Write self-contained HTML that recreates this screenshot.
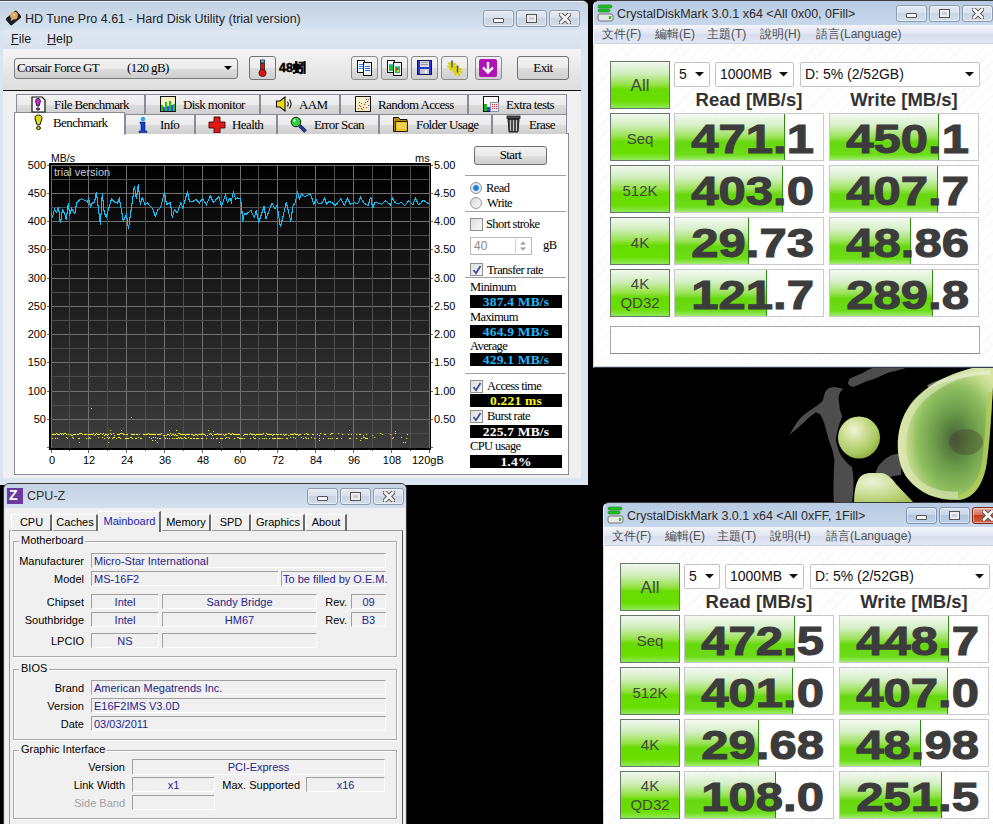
<!DOCTYPE html>
<html><head><meta charset="utf-8">
<style>
*{margin:0;padding:0;box-sizing:border-box}
html,body{width:993px;height:824px;overflow:hidden;background:#000}
body{position:relative;font-family:"Liberation Sans",sans-serif;font-size:12px;color:#000}
.a{position:absolute}
.ser{font-family:"Liberation Serif",serif;letter-spacing:-0.6px}
.frame{background:#dbe6f4}
.cap{position:absolute;height:17px;width:31px;border:1px solid #8a9bb4;border-radius:3px;background:linear-gradient(#e9eef5,#d3dce8 50%,#c8d3e1 51%,#d8e1ec)}
.tt{position:absolute;font-size:12px;white-space:nowrap;color:#1a1a1a}
.btn{position:absolute;border:1px solid #707070;border-radius:3px;background:linear-gradient(#f2f2f2,#ebebeb 50%,#dddddd 51%,#cfcfcf)}
.tab{position:absolute;border:1px solid #898c95;border-bottom:none;background:linear-gradient(#f2f2f2,#ebebeb 50%,#dddddd 51%,#cfcfcf);font-size:13px;white-space:nowrap}
.lbl{position:absolute;white-space:nowrap}
</style></head><body>
<div class="a" style="left:0;top:0;width:588px;height:485px;background:#dbe5f2;border-top:1px solid #4a4a4a;border-radius:0 6px 0 0;overflow:hidden"><div class="a" style="left:0;top:0;width:588px;height:30px;background:linear-gradient(#c2d1e2,#d7e3f0);border-top:1px solid #e6eef6"></div></div><svg class="a" style="left:5px;top:10px" width="16" height="16"><rect x="1.5" y="3.5" width="14" height="9" rx="1.5" transform="rotate(-40 8.5 8)" fill="#1c1c1c"/><circle cx="9" cy="5.6" r="3.9" fill="#eaa848"/><circle cx="9" cy="5" r="1.3" fill="#cfcfcf"/><path d="M9 5.5L6.3 10.5" stroke="#b0b0b0" stroke-width="1.6"/></svg><div class="tt" style="left:25px;top:11px;font-size:12.5px;line-height:16px;color:#222">HD Tune Pro 4.61 - Hard Disk Utility (trial version)</div><div class="a" style="left:483px;top:10px;width:31px;height:17px;border:1px solid #8d9ab0;border-radius:3px;background:linear-gradient(#e4eaf2,#d8e1ec 45%,#c9d5e4 50%,#d4deea 100%);box-shadow:inset 0 0 0 1px rgba(255,255,255,0.45)"></div><div class="a" style="left:516px;top:10px;width:31px;height:17px;border:1px solid #8d9ab0;border-radius:3px;background:linear-gradient(#e4eaf2,#d8e1ec 45%,#c9d5e4 50%,#d4deea 100%);box-shadow:inset 0 0 0 1px rgba(255,255,255,0.45)"></div><div class="a" style="left:549px;top:10px;width:31px;height:17px;border:1px solid #8d9ab0;border-radius:3px;background:linear-gradient(#e4eaf2,#d8e1ec 45%,#c9d5e4 50%,#d4deea 100%);box-shadow:inset 0 0 0 1px rgba(255,255,255,0.45)"></div><div class="a" style="left:493px;top:18px;width:11px;height:5px;border:1px solid #555;border-radius:1px;background:#f4f4f4"></div><div class="a" style="left:527px;top:15px;width:9px;height:7px;border:2px solid #eee;outline:1px solid #555;background:#c8d0dc"></div><svg class="a" style="left:559px;top:13px" width="12" height="11"><path d="M2 1.5L10 9.5M10 1.5L2 9.5" stroke="#555" stroke-width="4.6" stroke-linecap="round"/><path d="M2 1.5L10 9.5M10 1.5L2 9.5" stroke="#f4f4f4" stroke-width="2.8" stroke-linecap="round"/></svg><div class="a" style="left:3px;top:30px;width:578px;height:19px;background:linear-gradient(#dfe7f2,#d8e2ee)"></div><div class="tt" style="left:11px;top:31px;font-size:12.5px;line-height:16px"><u>F</u>ile</div><div class="tt" style="left:47px;top:31px;font-size:12.5px;line-height:16px"><u>H</u>elp</div><div class="a" style="left:3px;top:49px;width:578px;height:42px;background:linear-gradient(#f4f4f4,#e6e6e6 60%,#dedede);border-bottom:1px solid #111"></div><div class="a" style="left:3px;top:91px;width:578px;height:387px;background:#f0f0f0"></div><div class="a" style="left:14px;top:133px;width:555px;height:342px;background:#fff;border:1px solid #898c95"></div><div class="btn" style="left:14px;top:58px;width:224px;height:21px;border-color:#7a7a7a"></div><div class="lbl ser" style="left:17px;top:60px;font-size:13px;line-height:16px">Corsair Force GT</div><div class="lbl ser" style="left:127px;top:60px;font-size:13px;line-height:16px">(120 gB)</div><svg class="a" style="left:224px;top:66px" width="8" height="5"><path d="M0 0H8L4 4Z" fill="#000"/></svg><div class="btn" style="left:249px;top:56px;width:27px;height:24px"></div><svg class="a" style="left:257px;top:59px" width="12" height="18"><rect x="3.5" y="1" width="4" height="3" fill="#4cd0e8" stroke="#222" stroke-width="0.8"/><rect x="3.5" y="4" width="4" height="9" fill="#e01010" stroke="#222" stroke-width="0.8"/><circle cx="5.5" cy="14" r="3.6" fill="#e01010" stroke="#222" stroke-width="0.8"/></svg><div class="lbl" style="left:279px;top:60px;font-size:12.5px;font-weight:bold;line-height:15px;-webkit-text-stroke:0.5px #000">48<span style="font-size:13px;display:inline-block;width:13px;text-align:center">蚓</span></div><div class="btn" style="left:351px;top:56px;width:27px;height:24px;border-color:#8a8a8a"></div><div class="btn" style="left:381px;top:56px;width:27px;height:24px;border-color:#8a8a8a"></div><div class="btn" style="left:411px;top:56px;width:27px;height:24px;border-color:#8a8a8a"></div><div class="btn" style="left:441px;top:56px;width:27px;height:24px;border-color:#8a8a8a"></div><div class="btn" style="left:475px;top:56px;width:27px;height:24px;border-color:#8a8a8a"></div><svg class="a" style="left:356px;top:59px" width="18" height="18" shape-rendering="crispEdges"><rect x="1.5" y="1.5" width="7" height="12" fill="#fff" stroke="#111"/><rect x="7.5" y="3.5" width="8" height="13" fill="#f2f2f2" stroke="#111"/><path d="M3 5.5h4M3 7.5h4M3 9.5h4" stroke="#1a8cff"/><path d="M9 7.5h5M9 9.5h5M9 11.5h5" stroke="#1a6cff"/></svg><svg class="a" style="left:386px;top:59px" width="18" height="18" shape-rendering="crispEdges"><rect x="1.5" y="1.5" width="7" height="12" fill="#fff" stroke="#111"/><rect x="3" y="5" width="5" height="7" fill="#20c040"/><rect x="3" y="5" width="5" height="1" fill="#40c8f0"/><rect x="7.5" y="3.5" width="8" height="13" fill="#f2f2f2" stroke="#111"/><rect x="9" y="7" width="5" height="7" fill="#20c040"/><rect x="9" y="7" width="5" height="1" fill="#40c8f0"/><rect x="10" y="9" width="2" height="2" fill="#e02020"/><rect x="11" y="11" width="2" height="2" fill="#e0d020"/></svg><svg class="a" style="left:416px;top:59px" width="17" height="17" shape-rendering="crispEdges"><rect x="1.5" y="1.5" width="14" height="14" fill="#2838d8" stroke="#101060"/><rect x="4" y="2" width="9" height="6" fill="#d8d8d8"/><path d="M5 3.5h7M5 5.5h7" stroke="#999"/><rect x="4" y="10" width="9" height="5" fill="#c8c8c8"/><rect x="9" y="11" width="2" height="3" fill="#fff"/></svg><svg class="a" style="left:445px;top:59px" width="20" height="18"><circle cx="7" cy="7" r="3.6" fill="#e8e010" stroke="#d8d000" stroke-width="2.6" stroke-dasharray="1.8 1.4"/><circle cx="12.5" cy="12" r="3.6" fill="#e8e010" stroke="#d8d000" stroke-width="2.6" stroke-dasharray="1.8 1.4"/><path d="M7 1.5v7M12.5 6.5v7" stroke="#888" stroke-width="2"/><path d="M7 1.5v7M12.5 6.5v7" stroke="#333" stroke-width="0.6"/></svg><svg class="a" style="left:478px;top:58px" width="21" height="20"><rect x="1" y="1" width="18" height="18" rx="2" fill="#b012b8"/><path d="M10 4v10M5 9.5l5 5 5-5" stroke="#fff" stroke-width="2.4" fill="none"/></svg><div class="btn" style="left:517px;top:56px;width:52px;height:24px"></div><div class="lbl ser" style="left:517px;width:52px;text-align:center;top:60px;font-size:13px;line-height:16px">Exit</div><div class="tab" style="left:16px;top:94px;width:129px;height:20px"></div><div class="lbl ser" style="left:54px;top:98px;font-size:13px;line-height:14px">File Benchmark</div><div class="tab" style="left:145px;top:94px;width:115px;height:20px"></div><div class="lbl ser" style="left:183px;top:98px;font-size:13px;line-height:14px">Disk monitor</div><div class="tab" style="left:260px;top:94px;width:80px;height:20px"></div><div class="lbl ser" style="left:299px;top:98px;font-size:13px;line-height:14px">AAM</div><div class="tab" style="left:340px;top:94px;width:128px;height:20px"></div><div class="lbl ser" style="left:378px;top:98px;font-size:13px;line-height:14px">Random Access</div><div class="tab" style="left:468px;top:94px;width:99px;height:20px"></div><div class="lbl ser" style="left:506px;top:98px;font-size:13px;line-height:14px">Extra tests</div><div class="tab" style="left:125px;top:114px;width:70px;height:20px"></div><div class="lbl ser" style="left:160px;top:118px;font-size:13px;line-height:14px">Info</div><div class="tab" style="left:195px;top:114px;width:82px;height:20px"></div><div class="lbl ser" style="left:232px;top:118px;font-size:13px;line-height:14px">Health</div><div class="tab" style="left:277px;top:114px;width:102px;height:20px"></div><div class="lbl ser" style="left:314px;top:118px;font-size:13px;line-height:14px">Error Scan</div><div class="tab" style="left:379px;top:114px;width:113px;height:20px"></div><div class="lbl ser" style="left:416px;top:118px;font-size:13px;line-height:14px">Folder Usage</div><div class="tab" style="left:492px;top:114px;width:75px;height:20px"></div><div class="lbl ser" style="left:529px;top:118px;font-size:13px;line-height:14px">Erase</div><div class="a" style="left:14px;top:112px;width:111px;height:23px;background:#fff;border:1px solid #898c95;border-bottom:none"></div><div class="lbl ser" style="left:53px;top:116px;font-size:13px;line-height:14px">Benchmark</div><svg class="a" style="left:31px;top:96px" width="15" height="17"><path d="M1 1h10l3 3v12H1Z" fill="#f4f4f4" stroke="#111" stroke-width="1.2"/><path d="M7 2.5C9 2.5 9.6 4 9.2 6L8 10H6L4.8 6C4.4 4 5 2.5 7 2.5Z" fill="#e020e0" stroke="#111" stroke-width="0.9"/><ellipse cx="7" cy="13" rx="1.6" ry="1.1" fill="#e020e0" stroke="#111" stroke-width="0.9"/></svg><svg class="a" style="left:160px;top:96px" width="17" height="17" shape-rendering="crispEdges"><rect x="0.5" y="0.5" width="15" height="15" fill="#f6f2c0" stroke="#111"/><rect x="1" y="9" width="2" height="6" fill="#20c020"/><rect x="3" y="11" width="2" height="4" fill="#3050f0"/><rect x="5" y="6" width="2" height="9" fill="#20c020"/><rect x="7" y="10" width="2" height="5" fill="#3050f0"/><rect x="9" y="5" width="2" height="10" fill="#20c020"/><rect x="11" y="9" width="2" height="6" fill="#3050f0"/><rect x="13" y="8" width="2" height="7" fill="#20c020"/></svg><svg class="a" style="left:275px;top:96px" width="18" height="16"><path d="M1.5 5h3.5l5-4v14l-5-4H1.5Z" fill="#f0d818" stroke="#111" stroke-width="1.1"/><path d="M12.5 5.5q1.5 2.5 0 5M14.5 3.5q3 4.5 0 9" stroke="#111" stroke-width="1.1" fill="none"/></svg><svg class="a" style="left:355px;top:96px" width="17" height="17" shape-rendering="crispEdges"><rect x="0.5" y="0.5" width="15" height="15" fill="#f8f0c8" stroke="#111"/><path d="M3 12h1M5 10h1M7 13h1M9 8h1M11 11h1M12 5h1M6 7h1M13 3h1M4 6h1" stroke="#e02020"/><path d="M4 9h1M8 11h1M10 6h1M13 9h1M6 12h1M11 3h1" stroke="#2040e0"/></svg><svg class="a" style="left:483px;top:96px" width="17" height="17" shape-rendering="crispEdges"><rect x="0.5" y="0.5" width="15" height="15" fill="#fff" stroke="#111"/><rect x="1" y="8" width="3" height="7" fill="#20b020"/><rect x="4" y="11" width="3" height="4" fill="#2050e0"/><rect x="7.5" y="6.5" width="8" height="9" fill="#e8ecf8" stroke="#8890b0"/><path d="M9 8.5h1M11 8.5h1M13 8.5h1M9 10.5h1M11 10.5h1M13 10.5h1M9 12.5h1M11 12.5h1M13 12.5h1" stroke="#e02020"/></svg><svg class="a" style="left:33px;top:114px" width="11" height="17"><path d="M5.5 1C8.3 1 9.2 2.8 8.8 5L7 10.8H4L2.2 5C1.8 2.8 2.7 1 5.5 1Z" fill="#e0e010" stroke="#111" stroke-width="1"/><ellipse cx="5.5" cy="14" rx="2" ry="1.5" fill="#e0e010" stroke="#111" stroke-width="1"/></svg><svg class="a" style="left:138px;top:116px" width="10" height="17"><circle cx="5" cy="3" r="2.2" fill="#20a8f0"/><path d="M2 6h5v9h2v1.5H1V15h2V7.5H2z" fill="#1040d0" stroke="#102060" stroke-width="0.6"/></svg><svg class="a" style="left:208px;top:116px" width="18" height="17"><path d="M6 1h6v5h5v6h-5v5H6v-5H1V6h5z" fill="#e01818" stroke="#400808" stroke-width="0.9"/></svg><svg class="a" style="left:290px;top:116px" width="18" height="17"><path d="M9.5 9.5l6 6" stroke="#111" stroke-width="3.6"/><path d="M9.5 9.5l6 6" stroke="#2040c0" stroke-width="2"/><circle cx="6" cy="6" r="4.8" fill="#30d040" stroke="#111" stroke-width="0.9"/><circle cx="4.5" cy="4.5" r="1.3" fill="#c8f8c8"/></svg><svg class="a" style="left:392px;top:115px" width="18" height="18"><path d="M1.5 2.5h5l1.5 2h7v12h-13.5z" fill="#b88810" stroke="#111" stroke-width="1"/><path d="M3.5 6.5h12v10h-12z" fill="#e8c030" stroke="#111" stroke-width="0.9"/><path d="M5 8h9v6H5z" fill="#f4d858" opacity="0.7"/></svg><svg class="a" style="left:506px;top:115px" width="15" height="18"><rect x="1" y="1" width="13" height="2.5" fill="#555" stroke="#111" stroke-width="0.8"/><path d="M2 4h11l-1 13H3z" fill="#444" stroke="#111" stroke-width="0.9"/><path d="M4.5 5v11M7.5 5v11M10.5 5v11" stroke="#c8c8c8" stroke-width="1.1"/></svg><div class="btn" style="left:474px;top:146px;width:73px;height:19px"></div><div class="lbl ser" style="left:474px;width:73px;text-align:center;top:148px;font-size:13px;line-height:14px">Start</div><div class="a" style="left:465px;top:175px;width:101px;height:1px;background:#a0a0a0"></div><div class="a" style="left:465px;top:211px;width:101px;height:1px;background:#a0a0a0"></div><div class="a" style="left:465px;top:277px;width:101px;height:1px;background:#a0a0a0"></div><div class="a" style="left:465px;top:373px;width:101px;height:1px;background:#a0a0a0"></div><div class="a" style="left:470px;top:182px;width:12px;height:12px;border-radius:50%;border:1px solid #8a8a8a;background:radial-gradient(circle,#1e6fd0 0,#2a8ae8 2.5px,#dfe8f2 3.5px,#f4f4f4 6px)"></div><div class="a" style="left:470px;top:197px;width:12px;height:12px;border-radius:50%;border:1px solid #9a9a9a;background:linear-gradient(135deg,#d8d8d8,#fafafa)"></div><div class="lbl ser" style="left:486px;top:181px;font-size:12.5px;line-height:14px">Read</div><div class="lbl ser" style="left:487px;top:196px;font-size:12.5px;line-height:14px">Write</div><div class="a" style="left:470px;top:218px;width:13px;height:13px;border:1px solid #8f8f8f;background:linear-gradient(135deg,#dcdcdc,#f8f8f8)"></div><div class="lbl ser" style="left:486px;top:217px;font-size:12.5px;line-height:14px">Short stroke</div><div class="a" style="left:470px;top:237px;width:62px;height:18px;border:1px solid #b8b8b8;background:#fff"></div><div class="lbl" style="left:474px;top:239px;font-size:12px;line-height:14px;color:#8a8a8a">40</div><div class="a" style="left:515px;top:239px;width:15px;height:14px;border-left:1px solid #d0d0d0"></div><svg class="a" style="left:518px;top:240px" width="10" height="12"><path d="M2 4.5L5 1.5L8 4.5Z" fill="#9a9a9a"/><path d="M2 7.5L5 10.5L8 7.5Z" fill="#9a9a9a"/></svg><div class="lbl ser" style="left:543px;top:238px;font-size:12.5px;line-height:14px">gB</div><div class="a" style="left:470px;top:263px;width:13px;height:13px;border:1px solid #8f8f8f;background:linear-gradient(135deg,#dcdcdc,#f8f8f8)"></div><svg class="a" style="left:472px;top:265px" width="10" height="10"><path d="M1.5 5l2.5 3.2L8.5 1" stroke="#3a4fa0" stroke-width="1.8" fill="none"/></svg><div class="lbl ser" style="left:487px;top:263px;font-size:12.5px;line-height:14px">Transfer rate</div><div class="lbl ser" style="left:470px;top:281px;font-size:12.5px;line-height:13px">Minimum</div><div class="a ser" style="left:470px;top:295px;width:92px;height:13px;background:#000;color:#20b8f8;font-weight:bold;font-size:13.5px;line-height:13px;text-align:center;letter-spacing:0.2px">387.4 MB/s</div><div class="lbl ser" style="left:470px;top:311px;font-size:12.5px;line-height:13px">Maximum</div><div class="a ser" style="left:470px;top:325px;width:92px;height:13px;background:#000;color:#20b8f8;font-weight:bold;font-size:13.5px;line-height:13px;text-align:center;letter-spacing:0.2px">464.9 MB/s</div><div class="lbl ser" style="left:470px;top:340px;font-size:12.5px;line-height:13px">Average</div><div class="a ser" style="left:470px;top:353px;width:92px;height:13px;background:#000;color:#20b8f8;font-weight:bold;font-size:13.5px;line-height:13px;text-align:center;letter-spacing:0.2px">429.1 MB/s</div><div class="a" style="left:470px;top:380px;width:13px;height:13px;border:1px solid #8f8f8f;background:linear-gradient(135deg,#dcdcdc,#f8f8f8)"></div><svg class="a" style="left:472px;top:382px" width="10" height="10"><path d="M1.5 5l2.5 3.2L8.5 1" stroke="#3a4fa0" stroke-width="1.8" fill="none"/></svg><div class="lbl ser" style="left:487px;top:379px;font-size:12.5px;line-height:14px">Access time</div><div class="a ser" style="left:470px;top:394px;width:92px;height:13px;background:#000;color:#f8f820;font-weight:bold;font-size:13.5px;line-height:13px;text-align:center;letter-spacing:0.2px">0.221 ms</div><div class="a" style="left:470px;top:410px;width:13px;height:13px;border:1px solid #8f8f8f;background:linear-gradient(135deg,#dcdcdc,#f8f8f8)"></div><svg class="a" style="left:472px;top:412px" width="10" height="10"><path d="M1.5 5l2.5 3.2L8.5 1" stroke="#3a4fa0" stroke-width="1.8" fill="none"/></svg><div class="lbl ser" style="left:487px;top:409px;font-size:12.5px;line-height:14px">Burst rate</div><div class="a ser" style="left:470px;top:425px;width:92px;height:13px;background:#000;color:#fff;font-weight:bold;font-size:13.5px;line-height:13px;text-align:center;letter-spacing:0.2px">225.7 MB/s</div><div class="lbl ser" style="left:470px;top:440px;font-size:12.5px;line-height:13px">CPU usage</div><div class="a ser" style="left:470px;top:455px;width:92px;height:13px;background:#000;color:#fff;font-weight:bold;font-size:13.5px;line-height:13px;text-align:center;letter-spacing:0.2px">1.4%</div><svg class="a" style="left:0;top:0" width="588" height="485"><defs><linearGradient id="cg" x1="0" y1="0" x2="0" y2="1"><stop offset="0" stop-color="#000"/><stop offset="1" stop-color="#3d3d3d"/></linearGradient></defs><rect x="49" y="163" width="382" height="287" fill="#000"/><rect x="51" y="165" width="379" height="283" fill="url(#cg)"/><path d="M51.5 165V448M88.5 165V448M126.5 165V448M164.5 165V448M202.5 165V448M240.5 165V448M277.5 165V448M315.5 165V448M353.5 165V448M391.5 165V448M429.5 165V448M51 165.5H430M51 193.5H430M51 221.5H430M51 249.5H430M51 278.5H430M51 306.5H430M51 334.5H430M51 362.5H430M51 391.5H430M51 419.5H430" stroke="#707070" stroke-width="1" fill="none"/><path d="M69.5 165V448M107.5 165V448M145.5 165V448M183.5 165V448M221.5 165V448M258.5 165V448M296.5 165V448M334.5 165V448M372.5 165V448M410.5 165V448M51 179.5H430M51 207.5H430M51 235.5H430M51 264.5H430M51 292.5H430M51 320.5H430M51 348.5H430M51 376.5H430M51 405.5H430M51 433.5H430" stroke="#4e4e4e" stroke-width="1" fill="none"/><path d="M51.5 450v3M69.5 450v1M88.5 450v3M107.5 450v1M126.5 450v3M145.5 450v1M164.5 450v3M183.5 450v1M202.5 450v3M221.5 450v1M240.5 450v3M258.5 450v1M277.5 450v3M296.5 450v1M315.5 450v3M334.5 450v1M353.5 450v3M372.5 450v1M391.5 450v3M410.5 450v1M429.5 450v3M431 165.5h2M47 165.5h2M431 193.5h2M47 193.5h2M431 221.5h2M47 221.5h2M431 249.5h2M47 249.5h2M431 278.5h2M47 278.5h2M431 306.5h2M47 306.5h2M431 334.5h2M47 334.5h2M431 362.5h2M47 362.5h2M431 391.5h2M47 391.5h2M431 419.5h2M47 419.5h2M431 447.5h2M47 447.5h2" stroke="#6b6b6b" stroke-width="1" fill="none"/><rect x="49" y="448" width="382" height="2" fill="#000"/><text x="54" y="176" font-family="Liberation Sans" font-size="11" fill="#c8c8c8">trial version</text><path d="M51.3 213.0 L52.6 216.9 L54.5 209.0 L56.5 212.3 L58.5 207.1 L60.4 223.4 L62.4 209.7 L64.4 213.0 L66.3 219.5 L68.3 203.1 L69.6 215.6 L71.6 208.4 L74.8 213.6 L76.8 202.5 L81.4 198.6 L87.3 201.8 L88.6 198.6 L90.5 206.4 L92.5 202.5 L94.5 202.5 L96.4 192.0 L98.4 209.0 L100.4 224.7 L102.3 193.3 L104.3 213.0 L106.2 217.5 L111.5 198.6 L114.8 202.5 L117.4 203.1 L119.3 198.6 L123.3 220.8 L126.5 214.3 L128.5 228.7 L131.8 205.1 L134.4 186.1 L136.4 199.2 L138.3 184.2 L140.3 204.5 L142.2 197.3 L144.9 204.5 L147.5 203.1 L152.7 209.0 L155.3 216.2 L157.9 209.7 L160.6 207.7 L164.5 192.0 L166.5 204.5 L170.4 202.5 L172.3 218.2 L174.3 209.7 L177.0 212.3 L177.6 212.3 L178.9 208.4 L180.9 202.5 L182.9 208.4 L187.4 191.4 L189.4 201.2 L193.3 201.2 L195.9 199.2 L199.2 203.1 L202.5 198.6 L206.4 204.5 L210.3 195.9 L213.6 202.5 L218.8 196.6 L221.5 206.4 L225.4 194.6 L227.4 202.5 L230.0 197.9 L231.3 201.8 L233.2 192.0 L235.9 199.2 L237.8 197.9 L240.4 198.6 L241.8 207.1 L242.4 222.1 L244.4 213.6 L246.3 214.3 L250.9 210.3 L254.2 217.5 L256.2 211.0 L258.8 222.1 L264.0 206.4 L266.0 218.8 L271.9 203.1 L275.1 209.0 L277.1 205.1 L280.4 227.4 L286.3 202.5 L290.8 221.5 L292.8 206.4 L295.4 202.5 L297.4 191.4 L299.3 199.2 L301.3 194.0 L304.1 196.1 L305.0 196.6 L309.5 194.0 L311.6 196.8 L313.6 204.2 L316.3 199.5 L318.4 203.5 L321.8 202.9 L324.5 198.1 L326.5 204.2 L329.2 201.5 L332.6 202.9 L335.3 205.6 L340.8 198.8 L344.2 205.6 L347.6 198.1 L350.3 204.2 L354.4 202.9 L357.8 203.5 L360.5 197.4 L363.9 202.9 L368.0 205.6 L370.7 196.8 L372.7 208.3 L374.8 202.2 L377.5 202.9 L381.6 204.2 L385.6 200.8 L390.4 204.9 L392.4 198.1 L395.2 202.9 L399.2 203.5 L401.3 202.2 L404.7 205.6 L408.8 200.8 L412.8 204.9 L415.6 198.1 L418.3 204.9 L421.0 202.9 L423.0 200.1 L429.1 204.2" stroke="#12c2fa" stroke-width="1.1" fill="none" stroke-linejoin="miter" shape-rendering="crispEdges"/><path d="M52 434.5h1M52 438.5h1M53 434.5h1M54 434.5h1M55 434.5h1M55 438.5h1M56 433.5h1M57 434.5h1M57 438.5h1M58 434.5h1M59 434.5h1M60 433.5h1M61 434.5h1M62 433.5h1M63 434.5h1M64 433.5h1M65 433.5h1M66 434.5h1M66 437.5h1M67 438.5h1M68 434.5h1M70 434.5h1M71 435.5h1M72 435.5h1M72 437.5h1M73 434.5h1M73 438.5h1M74 434.5h1M75 434.5h1M77 434.5h1M78 434.5h1M78 438.5h1M79 433.5h1M79 438.5h1M79 442.5h1M80 433.5h1M81 433.5h1M82 434.5h1M84 434.5h1M85 434.5h1M86 434.5h1M86 438.5h1M88 434.5h1M88 438.5h1M89 434.5h1M89 437.5h1M90 434.5h1M90 438.5h1M91 434.5h1M92 434.5h1M93 433.5h1M94 435.5h1M95 434.5h1M96 433.5h1M97 434.5h1M98 434.5h1M98 437.5h1M99 434.5h1M100 433.5h1M102 434.5h1M102 437.5h1M103 433.5h1M104 435.5h1M104 438.5h1M105 434.5h1M106 434.5h1M107 435.5h1M107 437.5h1M108 434.5h1M108 438.5h1M108 442.5h1M109 437.5h1M110 433.5h1M110 430.5h1M111 434.5h1M112 438.5h1M113 433.5h1M113 437.5h1M114 435.5h1M114 437.5h1M116 438.5h1M117 434.5h1M118 434.5h1M118 437.5h1M119 434.5h1M119 437.5h1M120 433.5h1M120 438.5h1M121 433.5h1M121 430.5h1M122 433.5h1M123 434.5h1M124 434.5h1M125 438.5h1M126 434.5h1M126 438.5h1M127 434.5h1M127 438.5h1M128 438.5h1M130 437.5h1M131 434.5h1M131 437.5h1M132 434.5h1M132 438.5h1M133 434.5h1M134 434.5h1M135 438.5h1M136 434.5h1M136 438.5h1M137 434.5h1M138 437.5h1M139 434.5h1M140 438.5h1M141 438.5h1M143 434.5h1M144 434.5h1M145 434.5h1M146 434.5h1M147 434.5h1M148 433.5h1M149 434.5h1M149 437.5h1M150 434.5h1M151 434.5h1M151 438.5h1M152 434.5h1M152 440.5h1M153 434.5h1M153 437.5h1M154 434.5h1M155 434.5h1M155 437.5h1M155 440.5h1M157 434.5h1M157 438.5h1M157 442.5h1M158 434.5h1M159 434.5h1M159 438.5h1M160 434.5h1M160 438.5h1M161 433.5h1M163 435.5h1M164 435.5h1M164 437.5h1M165 438.5h1M166 435.5h1M167 434.5h1M167 438.5h1M168 434.5h1M169 435.5h1M169 438.5h1M169 430.5h1M170 433.5h1M171 435.5h1M172 434.5h1M172 438.5h1M173 434.5h1M174 435.5h1M174 438.5h1M175 434.5h1M176 435.5h1M176 438.5h1M176 430.5h1M177 435.5h1M177 438.5h1M178 433.5h1M178 437.5h1M179 433.5h1M179 438.5h1M180 434.5h1M180 437.5h1M181 434.5h1M181 438.5h1M182 434.5h1M182 438.5h1M183 434.5h1M184 434.5h1M184 437.5h1M185 435.5h1M185 438.5h1M186 434.5h1M186 438.5h1M187 434.5h1M188 434.5h1M188 437.5h1M189 434.5h1M190 438.5h1M191 434.5h1M191 438.5h1M192 434.5h1M193 435.5h1M193 438.5h1M194 435.5h1M194 438.5h1M195 434.5h1M196 434.5h1M196 438.5h1M197 435.5h1M197 438.5h1M198 434.5h1M198 438.5h1M199 434.5h1M200 434.5h1M201 434.5h1M201 438.5h1M202 433.5h1M202 438.5h1M203 434.5h1M204 434.5h1M205 435.5h1M206 438.5h1M207 435.5h1M208 430.5h1M209 434.5h1M210 433.5h1M211 434.5h1M211 438.5h1M212 435.5h1M213 438.5h1M213 431.5h1M214 434.5h1M215 434.5h1M216 434.5h1M216 438.5h1M217 433.5h1M217 438.5h1M218 434.5h1M219 434.5h1M219 442.5h1M220 434.5h1M220 438.5h1M221 434.5h1M221 438.5h1M222 438.5h1M223 434.5h1M224 435.5h1M225 434.5h1M225 438.5h1M226 434.5h1M226 437.5h1M228 433.5h1M228 437.5h1M229 433.5h1M229 438.5h1M230 434.5h1M231 434.5h1M232 433.5h1M233 434.5h1M234 434.5h1M234 438.5h1M235 434.5h1M236 434.5h1M237 434.5h1M237 437.5h1M238 434.5h1M238 437.5h1M239 434.5h1M239 438.5h1M240 438.5h1M241 438.5h1M242 438.5h1M243 435.5h1M244 434.5h1M244 438.5h1M245 434.5h1M246 434.5h1M247 434.5h1M249 434.5h1M250 433.5h1M250 438.5h1M251 434.5h1M252 434.5h1M253 434.5h1M253 437.5h1M254 434.5h1M254 438.5h1M255 435.5h1M255 438.5h1M256 434.5h1M257 434.5h1M258 434.5h1M259 434.5h1M259 438.5h1M260 434.5h1M261 434.5h1M262 434.5h1M262 438.5h1M263 433.5h1M264 438.5h1M265 435.5h1M266 433.5h1M266 438.5h1M267 434.5h1M268 434.5h1M269 434.5h1M269 438.5h1M270 434.5h1M271 434.5h1M272 435.5h1M272 438.5h1M273 434.5h1M273 438.5h1M274 434.5h1M274 438.5h1M275 438.5h1M276 434.5h1M277 434.5h1M277 438.5h1M278 434.5h1M278 438.5h1M279 438.5h1M280 434.5h1M280 438.5h1M281 434.5h1M282 438.5h1M283 434.5h1M284 435.5h1M285 434.5h1M286 434.5h1M286 438.5h1M287 438.5h1M288 435.5h1M290 434.5h1M290 437.5h1M291 434.5h1M292 434.5h1M293 434.5h1M293 437.5h1M294 433.5h1M295 434.5h1M295 438.5h1M296 434.5h1M297 434.5h1M298 435.5h1M299 434.5h1M300 434.5h1M301 437.5h1M303 438.5h1M304 434.5h1M305 437.5h1M306 433.5h1M306 438.5h1M307 434.5h1M308 434.5h1M308 438.5h1M311 437.5h1M312 434.5h1M313 434.5h1M314 438.5h1M317 434.5h1M319 435.5h1M319 438.5h1M319 440.5h1M320 433.5h1M323 438.5h1M324 434.5h1M325 434.5h1M328 438.5h1M330 434.5h1M330 438.5h1M331 433.5h1M332 433.5h1M332 438.5h1M336 438.5h1M337 438.5h1M338 433.5h1M341 438.5h1M342 434.5h1M348 434.5h1M349 438.5h1M349 430.5h1M350 438.5h1M351 434.5h1M356 434.5h1M356 438.5h1M359 434.5h1M360 434.5h1M360 440.5h1M361 438.5h1M363 435.5h1M363 437.5h1M364 437.5h1M365 438.5h1M366 434.5h1M366 438.5h1M367 438.5h1M372 435.5h1M374 437.5h1M380 433.5h1M382 434.5h1M390 434.5h1M392 438.5h1M393 437.5h1M395 433.5h1M395 431.5h1M401 437.5h1M403 442.5h1M405 442.5h1M406 438.5h1M407 434.5h1M91 408.5h1M131 417.5h1" stroke="#ffff00" stroke-width="1" fill="none" shape-rendering="crispEdges"/></svg><div class="lbl" style="left:0;width:46px;text-align:right;top:158px;font-size:11px;line-height:14px">500</div><div class="lbl" style="left:434px;top:158px;font-size:11px;line-height:14px">5.00</div><div class="lbl" style="left:0;width:46px;text-align:right;top:186px;font-size:11px;line-height:14px">450</div><div class="lbl" style="left:434px;top:186px;font-size:11px;line-height:14px">4.50</div><div class="lbl" style="left:0;width:46px;text-align:right;top:214px;font-size:11px;line-height:14px">400</div><div class="lbl" style="left:434px;top:214px;font-size:11px;line-height:14px">4.00</div><div class="lbl" style="left:0;width:46px;text-align:right;top:242px;font-size:11px;line-height:14px">350</div><div class="lbl" style="left:434px;top:242px;font-size:11px;line-height:14px">3.50</div><div class="lbl" style="left:0;width:46px;text-align:right;top:271px;font-size:11px;line-height:14px">300</div><div class="lbl" style="left:434px;top:271px;font-size:11px;line-height:14px">3.00</div><div class="lbl" style="left:0;width:46px;text-align:right;top:299px;font-size:11px;line-height:14px">250</div><div class="lbl" style="left:434px;top:299px;font-size:11px;line-height:14px">2.50</div><div class="lbl" style="left:0;width:46px;text-align:right;top:327px;font-size:11px;line-height:14px">200</div><div class="lbl" style="left:434px;top:327px;font-size:11px;line-height:14px">2.00</div><div class="lbl" style="left:0;width:46px;text-align:right;top:355px;font-size:11px;line-height:14px">150</div><div class="lbl" style="left:434px;top:355px;font-size:11px;line-height:14px">1.50</div><div class="lbl" style="left:0;width:46px;text-align:right;top:384px;font-size:11px;line-height:14px">100</div><div class="lbl" style="left:434px;top:384px;font-size:11px;line-height:14px">1.00</div><div class="lbl" style="left:0;width:46px;text-align:right;top:412px;font-size:11px;line-height:14px">50</div><div class="lbl" style="left:434px;top:412px;font-size:11px;line-height:14px">0.50</div><div class="lbl" style="left:12px;width:80px;text-align:center;top:453px;font-size:11px;line-height:14px">0</div><div class="lbl" style="left:49px;width:80px;text-align:center;top:453px;font-size:11px;line-height:14px">12</div><div class="lbl" style="left:87px;width:80px;text-align:center;top:453px;font-size:11px;line-height:14px">24</div><div class="lbl" style="left:125px;width:80px;text-align:center;top:453px;font-size:11px;line-height:14px">36</div><div class="lbl" style="left:163px;width:80px;text-align:center;top:453px;font-size:11px;line-height:14px">48</div><div class="lbl" style="left:200px;width:80px;text-align:center;top:453px;font-size:11px;line-height:14px">60</div><div class="lbl" style="left:238px;width:80px;text-align:center;top:453px;font-size:11px;line-height:14px">72</div><div class="lbl" style="left:276px;width:80px;text-align:center;top:453px;font-size:11px;line-height:14px">84</div><div class="lbl" style="left:314px;width:80px;text-align:center;top:453px;font-size:11px;line-height:14px">96</div><div class="lbl" style="left:352px;width:80px;text-align:center;top:453px;font-size:11px;line-height:14px">108</div><div class="lbl" style="left:412px;top:453px;font-size:11px;line-height:14px">120gB</div><div class="lbl" style="left:51px;top:152px;font-size:10.5px;line-height:13px">MB/s</div><div class="lbl" style="left:415px;top:151px;font-size:11px;line-height:14px">ms</div><style>.cdmv{font-family:"Liberation Sans",sans-serif;font-weight:bold;font-size:40.5px;line-height:40px;color:#3c3c3c;transform:scaleX(1.21);transform-origin:100% 50%;-webkit-text-stroke:1.1px #3c3c3c}</style><svg class="a" style="left:588px;top:367px" width="405" height="140"><defs><radialGradient id="sph" cx="0.38" cy="0.32" r="0.75"><stop offset="0" stop-color="#f0f4d8"/><stop offset="0.35" stop-color="#d0e098"/><stop offset="0.75" stop-color="#a8c860"/><stop offset="1" stop-color="#88a838"/></radialGradient><radialGradient id="cap" cx="0.3" cy="0.3" r="0.9"><stop offset="0" stop-color="#eef4d8"/><stop offset="0.5" stop-color="#c8dc90"/><stop offset="1" stop-color="#a0c050"/></radialGradient><radialGradient id="leaf" cx="0.6" cy="0.55" r="0.58"><stop offset="0" stop-color="#48603a"/><stop offset="0.35" stop-color="#6a9a48"/><stop offset="0.68" stop-color="#90c060"/><stop offset="0.86" stop-color="#c0d888"/><stop offset="1" stop-color="#d8e4a0"/></radialGradient></defs><g fill="#4d4d4d"><path d="M201 68.5 C206 60 210 53 213 50.5 C219 45 224 42 227 40 C231 37 234 35 235 33 C236 28 237 24 240 21.5 C244 19.5 250 20 255 21.8 C252 25 250.5 28 250.6 31 C251 36 251.5 40 252 43 C253 46 254 48 254 50 C250 60 248 68 248 74 C250 82 252 88 255 91 C258 95 261 98 264 100 C266 110 266 122 264 136 L246 136 C245 125 245.5 110 246.4 93 C245 85 244 81 243 79 C240 72 239 66 238 62.6 C236 55 234 50 232 47.3 C230 46 228 45.5 227.7 45.6 C224 48 220 51 217.5 54 C212 59 206 64 201 68.5 Z"/><path d="M260 16.7 C260.5 14 261 12.5 262 11.6 C266 9.5 269 8.3 272 7.3 C276 5.5 278 4 280 3 C283 1.5 285 1 287 0 L320 0 C314 2.5 308 4 302 5 C297 7 294 8.5 290.5 10 C286 12 281 13.5 277 15 C272 17 268 19 265 20 C263 19.5 261 18 260 16.7 Z"/><path d="M287 107 C289 101 291 97 294 95 C298 91 301 89 304 88 C308 87 311 86.5 314 86.3 L313 108 C309 108.5 305 109 302 110 C297 109 291 108 287 107 Z"/></g><circle cx="271" cy="70.5" r="21" fill="url(#sph)"/><path d="M266 136 C266 124 268 115 272 110 C275 107 278 106 283 106 L293 106 C298 106 303 110 308 117 L326 136 Z" fill="url(#cap)"/><path d="M405 -2 C375 0 340 14 322 38 C306 60 306 95 320 112 C333 128 352 134 372 133 C385 131 394 120 398 100 C401 80 403 50 405 20 Z" fill="url(#leaf)"/><path d="M402 2 C372 5 342 18 326 40 C312 60 311 92 323 109 C335 124 352 129 370 128" fill="none" stroke="#dfe8bc" stroke-width="7" opacity="0.6"/><path d="M372 130 C386 126 393 114 396 98 C399 78 401 50 402 25" fill="none" stroke="#b8cc58" stroke-width="5" opacity="0.75"/><ellipse cx="378" cy="75" rx="17" ry="13" fill="#45402c" opacity="0.4"/><path d="M340 20 C360 10 385 6 402 6" fill="none" stroke="#eef2d8" stroke-width="4" opacity="0.5"/></svg><div class="a" style="left:593px;top:0px;width:410px;height:368px;background:#dbe5f2;border:1px solid #3a3a3a;border-left-color:#eef3f9;border-radius:6px 6px 0 0"></div><div class="a" style="left:594px;top:1px;width:410px;height:25px;border-radius:6px 6px 0 0;background:linear-gradient(#b8cbe2,#c9d8ec)"></div><svg class="a" style="left:597px;top:4px" width="18" height="18"><rect x="1" y="1" width="14" height="3" rx="1.5" fill="#20c020" stroke="#108010" stroke-width="0.6"/><rect x="1" y="5" width="12" height="3" rx="1.5" fill="#20c020" stroke="#108010" stroke-width="0.6"/><rect x="1" y="10" width="15" height="7" rx="2" fill="#e8e8e8" stroke="#555" stroke-width="0.8"/><rect x="12" y="12" width="2" height="3" fill="#20c020"/></svg><div class="tt" style="left:617px;top:6px;font-size:12.5px;line-height:16px;color:#2a2a2a">CrystalDiskMark 3.0.1 x64 &lt;All 0x00, 0Fill&gt;</div><div class="a" style="left:896px;top:5px;width:31px;height:17px;border:1px solid #8d9ab0;border-radius:3px;background:linear-gradient(#e4eaf2,#d8e1ec 45%,#c9d5e4 50%,#d4deea 100%);box-shadow:inset 0 0 0 1px rgba(255,255,255,0.45)"></div><div class="a" style="left:929px;top:5px;width:31px;height:17px;border:1px solid #8d9ab0;border-radius:3px;background:linear-gradient(#e4eaf2,#d8e1ec 45%,#c9d5e4 50%,#d4deea 100%);box-shadow:inset 0 0 0 1px rgba(255,255,255,0.45)"></div><div class="a" style="left:962px;top:5px;width:31px;height:17px;border:1px solid #8d9ab0;border-radius:3px;background:linear-gradient(#e4eaf2,#d8e1ec 45%,#c9d5e4 50%,#d4deea 100%);box-shadow:inset 0 0 0 1px rgba(255,255,255,0.45)"></div><div class="a" style="left:906px;top:13px;width:11px;height:5px;border:1px solid #555;border-radius:1px;background:#f4f4f4"></div><div class="a" style="left:940px;top:10px;width:9px;height:7px;border:2px solid #eee;outline:1px solid #555;background:#c8d0dc"></div><svg class="a" style="left:972px;top:8px" width="12" height="11"><path d="M2 1.5L10 9.5M10 1.5L2 9.5" stroke="#555" stroke-width="4.6" stroke-linecap="round"/><path d="M2 1.5L10 9.5M10 1.5L2 9.5" stroke="#f4f4f4" stroke-width="2.8" stroke-linecap="round"/></svg><div class="a" style="left:594px;top:25px;width:400px;height:19px;background:linear-gradient(#f3f5fa,#dfe5f2 50%,#d6ddec 51%,#e2e7f3);border-bottom:1px solid #c8d2e0"></div><div class="lbl" style="left:602px;top:27px;font-size:12px;line-height:15px;color:#505050"><span style="display:inline-block;width:12px;text-align:center">文</span><span style="display:inline-block;width:12px;text-align:center">件</span>(F)</div><div class="lbl" style="left:655px;top:27px;font-size:12px;line-height:15px;color:#505050"><span style="display:inline-block;width:12px;text-align:center">編</span><span style="display:inline-block;width:12px;text-align:center">輯</span>(E)</div><div class="lbl" style="left:707px;top:27px;font-size:12px;line-height:15px;color:#505050"><span style="display:inline-block;width:12px;text-align:center">主</span><span style="display:inline-block;width:12px;text-align:center">題</span>(T)</div><div class="lbl" style="left:760px;top:27px;font-size:12px;line-height:15px;color:#505050"><span style="display:inline-block;width:12px;text-align:center">說</span><span style="display:inline-block;width:12px;text-align:center">明</span>(H)</div><div class="lbl" style="left:816px;top:27px;font-size:12px;line-height:15px;color:#505050"><span style="display:inline-block;width:12px;text-align:center">語</span><span style="display:inline-block;width:12px;text-align:center">言</span>(Language)</div><div class="a" style="left:593px;top:44px;width:400px;height:323px;background:repeating-linear-gradient(135deg,#ffffff 0px,#ffffff 5px,#f7f7f7 6.5px,#ffffff 8px);border-left:1px solid #c8d8ec;border-bottom:1px solid #c8d8ec"></div><div class="a" style="left:610px;top:61px;width:60px;height:48px;border:1px solid #667866;background:linear-gradient(#f2f6f0 0%,#d0eebc 25%,#94e244 50%,#66dc00 60%,#6ade00 85%,#90ea58 100%)"></div><div class="lbl" style="left:610px;width:60px;text-align:center;top:76px;font-size:17px;line-height:19px;color:#454545">All</div><div class="a" style="left:610px;top:113px;width:60px;height:48px;border:1px solid #667866;background:linear-gradient(#f2f6f0 0%,#d0eebc 25%,#94e244 50%,#66dc00 60%,#6ade00 85%,#90ea58 100%)"></div><div class="lbl" style="left:610px;width:60px;text-align:center;top:129px;font-size:15px;line-height:19px;color:#454545">Seq</div><div class="a" style="left:610px;top:165px;width:60px;height:48px;border:1px solid #667866;background:linear-gradient(#f2f6f0 0%,#d0eebc 25%,#94e244 50%,#66dc00 60%,#6ade00 85%,#90ea58 100%)"></div><div class="lbl" style="left:610px;width:60px;text-align:center;top:181px;font-size:15px;line-height:19px;color:#454545">512K</div><div class="a" style="left:610px;top:217px;width:60px;height:48px;border:1px solid #667866;background:linear-gradient(#f2f6f0 0%,#d0eebc 25%,#94e244 50%,#66dc00 60%,#6ade00 85%,#90ea58 100%)"></div><div class="lbl" style="left:610px;width:60px;text-align:center;top:233px;font-size:15px;line-height:19px;color:#454545">4K</div><div class="a" style="left:610px;top:269px;width:60px;height:48px;border:1px solid #667866;background:linear-gradient(#f2f6f0 0%,#d0eebc 25%,#94e244 50%,#66dc00 60%,#6ade00 85%,#90ea58 100%)"></div><div class="lbl" style="left:610px;width:60px;text-align:center;top:274px;font-size:15px;line-height:19px;color:#454545">4K<br>QD32</div><div class="a" style="left:674px;top:62px;width:36px;height:25px;border:1px solid #c4c4c4;border-radius:2px;background:#fff"></div><div class="lbl" style="left:679px;top:66px;font-size:14px;line-height:17px;color:#111">5</div><svg class="a" style="left:695px;top:72px" width="9" height="5"><path d="M0 0H9L4.5 4.5Z" fill="#111"/></svg><div class="a" style="left:715px;top:62px;width:79px;height:25px;border:1px solid #c4c4c4;border-radius:2px;background:#fff"></div><div class="lbl" style="left:720px;top:66px;font-size:14px;line-height:17px;color:#111">1000MB</div><svg class="a" style="left:779px;top:72px" width="9" height="5"><path d="M0 0H9L4.5 4.5Z" fill="#111"/></svg><div class="a" style="left:800px;top:62px;width:180px;height:25px;border:1px solid #c4c4c4;border-radius:2px;background:#fff"></div><div class="lbl" style="left:805px;top:66px;font-size:14px;line-height:17px;color:#111">D: 5% (2/52GB)</div><svg class="a" style="left:965px;top:72px" width="9" height="5"><path d="M0 0H9L4.5 4.5Z" fill="#111"/></svg><div class="lbl" style="left:674px;width:150px;text-align:center;top:90px;font-size:18.5px;font-weight:bold;line-height:20px;color:#333">Read [MB/s]</div><div class="lbl" style="left:829px;width:150px;text-align:center;top:90px;font-size:18.5px;font-weight:bold;line-height:20px;color:#333">Write [MB/s]</div><div class="a" style="left:674px;top:113px;width:150px;height:48px;border:1px solid #c8c8c8;background:#fff"></div><div class="a" style="left:675px;top:114px;width:110px;height:46px;background:linear-gradient(#f4f8f2 0%,#d6f0c8 25%,#9ae258 50%,#66d80e 62%,#6cdc18 88%,#a0ec70 100%);border-right:1px solid #2e8a10"></div><div class="lbl cdmv" style="left:674px;width:140px;text-align:right;top:119px">471.1</div><div class="a" style="left:829px;top:113px;width:150px;height:48px;border:1px solid #c8c8c8;background:#fff"></div><div class="a" style="left:830px;top:114px;width:109px;height:46px;background:linear-gradient(#f4f8f2 0%,#d6f0c8 25%,#9ae258 50%,#66d80e 62%,#6cdc18 88%,#a0ec70 100%);border-right:1px solid #2e8a10"></div><div class="lbl cdmv" style="left:829px;width:140px;text-align:right;top:119px">450.1</div><div class="a" style="left:674px;top:165px;width:150px;height:48px;border:1px solid #c8c8c8;background:#fff"></div><div class="a" style="left:675px;top:166px;width:108px;height:46px;background:linear-gradient(#f4f8f2 0%,#d6f0c8 25%,#9ae258 50%,#66d80e 62%,#6cdc18 88%,#a0ec70 100%);border-right:1px solid #2e8a10"></div><div class="lbl cdmv" style="left:674px;width:140px;text-align:right;top:171px">403.0</div><div class="a" style="left:829px;top:165px;width:150px;height:48px;border:1px solid #c8c8c8;background:#fff"></div><div class="a" style="left:830px;top:166px;width:108px;height:46px;background:linear-gradient(#f4f8f2 0%,#d6f0c8 25%,#9ae258 50%,#66d80e 62%,#6cdc18 88%,#a0ec70 100%);border-right:1px solid #2e8a10"></div><div class="lbl cdmv" style="left:829px;width:140px;text-align:right;top:171px">407.7</div><div class="a" style="left:674px;top:217px;width:150px;height:48px;border:1px solid #c8c8c8;background:#fff"></div><div class="a" style="left:675px;top:218px;width:74px;height:46px;background:linear-gradient(#f4f8f2 0%,#d6f0c8 25%,#9ae258 50%,#66d80e 62%,#6cdc18 88%,#a0ec70 100%);border-right:1px solid #2e8a10"></div><div class="lbl cdmv" style="left:674px;width:140px;text-align:right;top:223px">29.73</div><div class="a" style="left:829px;top:217px;width:150px;height:48px;border:1px solid #c8c8c8;background:#fff"></div><div class="a" style="left:830px;top:218px;width:81px;height:46px;background:linear-gradient(#f4f8f2 0%,#d6f0c8 25%,#9ae258 50%,#66d80e 62%,#6cdc18 88%,#a0ec70 100%);border-right:1px solid #2e8a10"></div><div class="lbl cdmv" style="left:829px;width:140px;text-align:right;top:223px">48.86</div><div class="a" style="left:674px;top:269px;width:150px;height:48px;border:1px solid #c8c8c8;background:#fff"></div><div class="a" style="left:675px;top:270px;width:92px;height:46px;background:linear-gradient(#f4f8f2 0%,#d6f0c8 25%,#9ae258 50%,#66d80e 62%,#6cdc18 88%,#a0ec70 100%);border-right:1px solid #2e8a10"></div><div class="lbl cdmv" style="left:674px;width:140px;text-align:right;top:275px">121.7</div><div class="a" style="left:829px;top:269px;width:150px;height:48px;border:1px solid #c8c8c8;background:#fff"></div><div class="a" style="left:830px;top:270px;width:103px;height:46px;background:linear-gradient(#f4f8f2 0%,#d6f0c8 25%,#9ae258 50%,#66d80e 62%,#6cdc18 88%,#a0ec70 100%);border-right:1px solid #2e8a10"></div><div class="lbl cdmv" style="left:829px;width:140px;text-align:right;top:275px">289.8</div><div class="a" style="left:610px;top:326px;width:370px;height:28px;border:1px solid #a8a8a8;border-bottom-color:#888;background:#fff"></div><div class="a" style="left:603px;top:502px;width:400px;height:368px;background:#dbe5f2;border:1px solid #3a3a3a;border-left-color:#eef3f9;border-radius:6px 6px 0 0"></div><div class="a" style="left:604px;top:503px;width:400px;height:25px;border-radius:6px 6px 0 0;background:linear-gradient(#b8cbe2,#c9d8ec)"></div><svg class="a" style="left:607px;top:506px" width="18" height="18"><rect x="1" y="1" width="14" height="3" rx="1.5" fill="#20c020" stroke="#108010" stroke-width="0.6"/><rect x="1" y="5" width="12" height="3" rx="1.5" fill="#20c020" stroke="#108010" stroke-width="0.6"/><rect x="1" y="10" width="15" height="7" rx="2" fill="#e8e8e8" stroke="#555" stroke-width="0.8"/><rect x="12" y="12" width="2" height="3" fill="#20c020"/></svg><div class="tt" style="left:627px;top:508px;font-size:12.5px;line-height:16px;color:#2a2a2a">CrystalDiskMark 3.0.1 x64 &lt;All 0xFF, 1Fill&gt;</div><div class="a" style="left:906px;top:507px;width:31px;height:17px;border:1px solid #7f93b0;border-radius:3px;background:linear-gradient(#d6e2f0,#c6d6ea 45%,#b0c6e0 50%,#bcd0e8 100%);box-shadow:inset 0 0 0 1px rgba(255,255,255,0.45)"></div><div class="a" style="left:939px;top:507px;width:31px;height:17px;border:1px solid #7f93b0;border-radius:3px;background:linear-gradient(#d6e2f0,#c6d6ea 45%,#b0c6e0 50%,#bcd0e8 100%);box-shadow:inset 0 0 0 1px rgba(255,255,255,0.45)"></div><div class="a" style="left:972px;top:507px;width:31px;height:17px;border:1px solid #7a2818;border-radius:3px;background:linear-gradient(#e8a89a,#d87060 45%,#c83c20 50%,#d4644a 100%);box-shadow:inset 0 0 0 1px rgba(255,255,255,0.45)"></div><div class="a" style="left:916px;top:515px;width:11px;height:5px;border:1px solid #555;border-radius:1px;background:#f4f4f4"></div><div class="a" style="left:950px;top:512px;width:9px;height:7px;border:2px solid #eee;outline:1px solid #555;background:#c8d0dc"></div><svg class="a" style="left:982px;top:510px" width="12" height="11"><path d="M2 1.5L10 9.5M10 1.5L2 9.5" stroke="#555" stroke-width="4.6" stroke-linecap="round"/><path d="M2 1.5L10 9.5M10 1.5L2 9.5" stroke="#f4f4f4" stroke-width="2.8" stroke-linecap="round"/></svg><div class="a" style="left:604px;top:527px;width:390px;height:19px;background:linear-gradient(#f3f5fa,#dfe5f2 50%,#d6ddec 51%,#e2e7f3);border-bottom:1px solid #c8d2e0"></div><div class="lbl" style="left:612px;top:529px;font-size:12px;line-height:15px;color:#505050"><span style="display:inline-block;width:12px;text-align:center">文</span><span style="display:inline-block;width:12px;text-align:center">件</span>(F)</div><div class="lbl" style="left:665px;top:529px;font-size:12px;line-height:15px;color:#505050"><span style="display:inline-block;width:12px;text-align:center">編</span><span style="display:inline-block;width:12px;text-align:center">輯</span>(E)</div><div class="lbl" style="left:717px;top:529px;font-size:12px;line-height:15px;color:#505050"><span style="display:inline-block;width:12px;text-align:center">主</span><span style="display:inline-block;width:12px;text-align:center">題</span>(T)</div><div class="lbl" style="left:770px;top:529px;font-size:12px;line-height:15px;color:#505050"><span style="display:inline-block;width:12px;text-align:center">說</span><span style="display:inline-block;width:12px;text-align:center">明</span>(H)</div><div class="lbl" style="left:826px;top:529px;font-size:12px;line-height:15px;color:#505050"><span style="display:inline-block;width:12px;text-align:center">語</span><span style="display:inline-block;width:12px;text-align:center">言</span>(Language)</div><div class="a" style="left:603px;top:546px;width:390px;height:323px;background:repeating-linear-gradient(135deg,#ffffff 0px,#ffffff 5px,#f7f7f7 6.5px,#ffffff 8px);border-left:1px solid #c8d8ec;border-bottom:1px solid #c8d8ec"></div><div class="a" style="left:620px;top:563px;width:60px;height:48px;border:1px solid #667866;background:linear-gradient(#f2f6f0 0%,#d0eebc 25%,#94e244 50%,#66dc00 60%,#6ade00 85%,#90ea58 100%)"></div><div class="lbl" style="left:620px;width:60px;text-align:center;top:578px;font-size:17px;line-height:19px;color:#454545">All</div><div class="a" style="left:620px;top:615px;width:60px;height:48px;border:1px solid #667866;background:linear-gradient(#f2f6f0 0%,#d0eebc 25%,#94e244 50%,#66dc00 60%,#6ade00 85%,#90ea58 100%)"></div><div class="lbl" style="left:620px;width:60px;text-align:center;top:631px;font-size:15px;line-height:19px;color:#454545">Seq</div><div class="a" style="left:620px;top:667px;width:60px;height:48px;border:1px solid #667866;background:linear-gradient(#f2f6f0 0%,#d0eebc 25%,#94e244 50%,#66dc00 60%,#6ade00 85%,#90ea58 100%)"></div><div class="lbl" style="left:620px;width:60px;text-align:center;top:683px;font-size:15px;line-height:19px;color:#454545">512K</div><div class="a" style="left:620px;top:719px;width:60px;height:48px;border:1px solid #667866;background:linear-gradient(#f2f6f0 0%,#d0eebc 25%,#94e244 50%,#66dc00 60%,#6ade00 85%,#90ea58 100%)"></div><div class="lbl" style="left:620px;width:60px;text-align:center;top:735px;font-size:15px;line-height:19px;color:#454545">4K</div><div class="a" style="left:620px;top:771px;width:60px;height:48px;border:1px solid #667866;background:linear-gradient(#f2f6f0 0%,#d0eebc 25%,#94e244 50%,#66dc00 60%,#6ade00 85%,#90ea58 100%)"></div><div class="lbl" style="left:620px;width:60px;text-align:center;top:776px;font-size:15px;line-height:19px;color:#454545">4K<br>QD32</div><div class="a" style="left:684px;top:564px;width:36px;height:25px;border:1px solid #c4c4c4;border-radius:2px;background:#fff"></div><div class="lbl" style="left:689px;top:568px;font-size:14px;line-height:17px;color:#111">5</div><svg class="a" style="left:705px;top:574px" width="9" height="5"><path d="M0 0H9L4.5 4.5Z" fill="#111"/></svg><div class="a" style="left:725px;top:564px;width:79px;height:25px;border:1px solid #c4c4c4;border-radius:2px;background:#fff"></div><div class="lbl" style="left:730px;top:568px;font-size:14px;line-height:17px;color:#111">1000MB</div><svg class="a" style="left:789px;top:574px" width="9" height="5"><path d="M0 0H9L4.5 4.5Z" fill="#111"/></svg><div class="a" style="left:810px;top:564px;width:180px;height:25px;border:1px solid #c4c4c4;border-radius:2px;background:#fff"></div><div class="lbl" style="left:815px;top:568px;font-size:14px;line-height:17px;color:#111">D: 5% (2/52GB)</div><svg class="a" style="left:975px;top:574px" width="9" height="5"><path d="M0 0H9L4.5 4.5Z" fill="#111"/></svg><div class="lbl" style="left:684px;width:150px;text-align:center;top:592px;font-size:18.5px;font-weight:bold;line-height:20px;color:#333">Read [MB/s]</div><div class="lbl" style="left:839px;width:150px;text-align:center;top:592px;font-size:18.5px;font-weight:bold;line-height:20px;color:#333">Write [MB/s]</div><div class="a" style="left:684px;top:615px;width:150px;height:48px;border:1px solid #c8c8c8;background:#fff"></div><div class="a" style="left:685px;top:616px;width:110px;height:46px;background:linear-gradient(#f4f8f2 0%,#d6f0c8 25%,#9ae258 50%,#66d80e 62%,#6cdc18 88%,#a0ec70 100%);border-right:1px solid #2e8a10"></div><div class="lbl cdmv" style="left:684px;width:140px;text-align:right;top:621px">472.5</div><div class="a" style="left:839px;top:615px;width:150px;height:48px;border:1px solid #c8c8c8;background:#fff"></div><div class="a" style="left:840px;top:616px;width:109px;height:46px;background:linear-gradient(#f4f8f2 0%,#d6f0c8 25%,#9ae258 50%,#66d80e 62%,#6cdc18 88%,#a0ec70 100%);border-right:1px solid #2e8a10"></div><div class="lbl cdmv" style="left:839px;width:140px;text-align:right;top:621px">448.7</div><div class="a" style="left:684px;top:667px;width:150px;height:48px;border:1px solid #c8c8c8;background:#fff"></div><div class="a" style="left:685px;top:668px;width:108px;height:46px;background:linear-gradient(#f4f8f2 0%,#d6f0c8 25%,#9ae258 50%,#66d80e 62%,#6cdc18 88%,#a0ec70 100%);border-right:1px solid #2e8a10"></div><div class="lbl cdmv" style="left:684px;width:140px;text-align:right;top:673px">401.0</div><div class="a" style="left:839px;top:667px;width:150px;height:48px;border:1px solid #c8c8c8;background:#fff"></div><div class="a" style="left:840px;top:668px;width:108px;height:46px;background:linear-gradient(#f4f8f2 0%,#d6f0c8 25%,#9ae258 50%,#66d80e 62%,#6cdc18 88%,#a0ec70 100%);border-right:1px solid #2e8a10"></div><div class="lbl cdmv" style="left:839px;width:140px;text-align:right;top:673px">407.0</div><div class="a" style="left:684px;top:719px;width:150px;height:48px;border:1px solid #c8c8c8;background:#fff"></div><div class="a" style="left:685px;top:720px;width:74px;height:46px;background:linear-gradient(#f4f8f2 0%,#d6f0c8 25%,#9ae258 50%,#66d80e 62%,#6cdc18 88%,#a0ec70 100%);border-right:1px solid #2e8a10"></div><div class="lbl cdmv" style="left:684px;width:140px;text-align:right;top:725px">29.68</div><div class="a" style="left:839px;top:719px;width:150px;height:48px;border:1px solid #c8c8c8;background:#fff"></div><div class="a" style="left:840px;top:720px;width:81px;height:46px;background:linear-gradient(#f4f8f2 0%,#d6f0c8 25%,#9ae258 50%,#66d80e 62%,#6cdc18 88%,#a0ec70 100%);border-right:1px solid #2e8a10"></div><div class="lbl cdmv" style="left:839px;width:140px;text-align:right;top:725px">48.98</div><div class="a" style="left:684px;top:771px;width:150px;height:48px;border:1px solid #c8c8c8;background:#fff"></div><div class="a" style="left:685px;top:772px;width:91px;height:46px;background:linear-gradient(#f4f8f2 0%,#d6f0c8 25%,#9ae258 50%,#66d80e 62%,#6cdc18 88%,#a0ec70 100%);border-right:1px solid #2e8a10"></div><div class="lbl cdmv" style="left:684px;width:140px;text-align:right;top:777px">108.0</div><div class="a" style="left:839px;top:771px;width:150px;height:48px;border:1px solid #c8c8c8;background:#fff"></div><div class="a" style="left:840px;top:772px;width:102px;height:46px;background:linear-gradient(#f4f8f2 0%,#d6f0c8 25%,#9ae258 50%,#66d80e 62%,#6cdc18 88%,#a0ec70 100%);border-right:1px solid #2e8a10"></div><div class="lbl cdmv" style="left:839px;width:140px;text-align:right;top:777px">251.5</div><div class="a" style="left:620px;top:828px;width:370px;height:28px;border:1px solid #a8a8a8;border-bottom-color:#888;background:#fff"></div><style>.cz{font-family:"Liberation Sans",sans-serif;font-size:11px;line-height:13px}</style><div class="a" style="left:3px;top:483px;width:404px;height:345px;background:#dbe5f2;border:1px solid #3a3a3a;border-radius:6px 6px 0 0"></div><div class="a" style="left:4px;top:484px;width:402px;height:24px;border-radius:6px 6px 0 0;background:linear-gradient(#c3d2e4,#d5e0ef)"></div><div class="a" style="left:7px;top:488px;width:16px;height:16px;background:#6a3aa0"></div><div class="lbl" style="left:9px;top:487px;font-size:14px;font-weight:bold;color:#fff;line-height:17px">Z</div><div class="tt" style="left:27px;top:489px;font-size:12.5px;line-height:15px;color:#333">CPU-Z</div><div class="a" style="left:307px;top:488px;width:31px;height:17px;border:1px solid #8d9ab0;border-radius:3px;background:linear-gradient(#e4eaf2,#d8e1ec 45%,#c9d5e4 50%,#d4deea 100%);box-shadow:inset 0 0 0 1px rgba(255,255,255,0.45)"></div><div class="a" style="left:340px;top:488px;width:31px;height:17px;border:1px solid #8d9ab0;border-radius:3px;background:linear-gradient(#e4eaf2,#d8e1ec 45%,#c9d5e4 50%,#d4deea 100%);box-shadow:inset 0 0 0 1px rgba(255,255,255,0.45)"></div><div class="a" style="left:373px;top:488px;width:31px;height:17px;border:1px solid #8d9ab0;border-radius:3px;background:linear-gradient(#e4eaf2,#d8e1ec 45%,#c9d5e4 50%,#d4deea 100%);box-shadow:inset 0 0 0 1px rgba(255,255,255,0.45)"></div><div class="a" style="left:317px;top:496px;width:11px;height:5px;border:1px solid #555;border-radius:1px;background:#f4f4f4"></div><div class="a" style="left:351px;top:493px;width:9px;height:7px;border:2px solid #eee;outline:1px solid #555;background:#c8d0dc"></div><svg class="a" style="left:383px;top:491px" width="12" height="11"><path d="M2 1.5L10 9.5M10 1.5L2 9.5" stroke="#555" stroke-width="4.6" stroke-linecap="round"/><path d="M2 1.5L10 9.5M10 1.5L2 9.5" stroke="#f4f4f4" stroke-width="2.8" stroke-linecap="round"/></svg><div class="a" style="left:5px;top:508px;width:400px;height:320px;background:#f0f0f0"></div><div class="a" style="left:9px;top:530px;width:394px;height:300px;border:1px solid #9a9a9a;border-right-color:#555;background:#f0f0f0"></div><div class="a" style="left:11px;top:514px;width:41px;height:17px;border-left:1px solid #fff;border-right:2px solid #6a6a6a;border-top:1px solid #fff"></div><div class="lbl cz" style="left:11px;width:41px;text-align:center;top:516px">CPU</div><div class="a" style="left:52px;top:514px;width:46px;height:17px;border-left:1px solid #fff;border-right:2px solid #6a6a6a;border-top:1px solid #fff"></div><div class="lbl cz" style="left:52px;width:46px;text-align:center;top:516px">Caches</div><div class="a" style="left:161px;top:514px;width:50px;height:17px;border-left:1px solid #fff;border-right:2px solid #6a6a6a;border-top:1px solid #fff"></div><div class="lbl cz" style="left:161px;width:50px;text-align:center;top:516px">Memory</div><div class="a" style="left:211px;top:514px;width:40px;height:17px;border-left:1px solid #fff;border-right:2px solid #6a6a6a;border-top:1px solid #fff"></div><div class="lbl cz" style="left:211px;width:40px;text-align:center;top:516px">SPD</div><div class="a" style="left:251px;top:514px;width:54px;height:17px;border-left:1px solid #fff;border-right:2px solid #6a6a6a;border-top:1px solid #fff"></div><div class="lbl cz" style="left:251px;width:54px;text-align:center;top:516px">Graphics</div><div class="a" style="left:305px;top:514px;width:42px;height:17px;border-left:1px solid #fff;border-right:2px solid #6a6a6a;border-top:1px solid #fff"></div><div class="lbl cz" style="left:305px;width:42px;text-align:center;top:516px">About</div><div class="a" style="left:98px;top:511px;width:63px;height:21px;background:#f0f0f0;border-left:1px solid #fff;border-top:1px solid #fff;border-right:2px solid #6a6a6a"></div><div class="lbl cz" style="left:98px;width:63px;text-align:center;top:515px;color:#1a1ab0">Mainboard</div><div class="a" style="left:13px;top:541px;width:384px;height:116px;border:1px solid #a8a8a8;box-shadow:inset 1px 1px 0 #fff, 1px 1px 0 #fff"></div><div class="lbl cz" style="left:19px;top:534px;background:#f0f0f0;padding:0 2px;color:#000">Motherboard</div><div class="lbl cz" style="left:-36px;width:120px;text-align:right;top:555px;color:#000">Manufacturer</div><div class="a" style="left:91px;top:553px;width:295px;height:15px;border:1px solid;border-color:#a0a0a0 #ffffff #ffffff #a0a0a0;background:#f0f0f0"></div><div class="lbl cz" style="left:94px;top:555px;color:#1e1e8c">Micro-Star International</div><div class="lbl cz" style="left:-36px;width:120px;text-align:right;top:573px;color:#000">Model</div><div class="a" style="left:91px;top:571px;width:188px;height:15px;border:1px solid;border-color:#a0a0a0 #ffffff #ffffff #a0a0a0;background:#f0f0f0"></div><div class="lbl cz" style="left:94px;top:573px;color:#1e1e8c">MS-16F2</div><div class="a" style="left:281px;top:571px;width:105px;height:15px;border:1px solid;border-color:#a0a0a0 #ffffff #ffffff #a0a0a0;background:#f0f0f0"></div><div class="lbl cz" style="left:283px;top:573px;color:#1e1e8c">To be filled by O.E.M.</div><div class="lbl cz" style="left:-36px;width:120px;text-align:right;top:596px;color:#000">Chipset</div><div class="a" style="left:91px;top:594px;width:68px;height:15px;border:1px solid;border-color:#a0a0a0 #ffffff #ffffff #a0a0a0;background:#f0f0f0"></div><div class="lbl cz" style="left:91px;width:68px;text-align:center;top:596px;color:#1e1e8c">Intel</div><div class="a" style="left:162px;top:594px;width:155px;height:15px;border:1px solid;border-color:#a0a0a0 #ffffff #ffffff #a0a0a0;background:#f0f0f0"></div><div class="lbl cz" style="left:162px;width:155px;text-align:center;top:596px;color:#1e1e8c">Sandy Bridge</div><div class="lbl cz" style="left:227px;width:120px;text-align:right;top:596px;color:#000">Rev.</div><div class="a" style="left:351px;top:594px;width:35px;height:15px;border:1px solid;border-color:#a0a0a0 #ffffff #ffffff #a0a0a0;background:#f0f0f0"></div><div class="lbl cz" style="left:351px;width:35px;text-align:center;top:596px;color:#1e1e8c">09</div><div class="lbl cz" style="left:-36px;width:120px;text-align:right;top:614px;color:#000">Southbridge</div><div class="a" style="left:91px;top:612px;width:68px;height:15px;border:1px solid;border-color:#a0a0a0 #ffffff #ffffff #a0a0a0;background:#f0f0f0"></div><div class="lbl cz" style="left:91px;width:68px;text-align:center;top:614px;color:#1e1e8c">Intel</div><div class="a" style="left:162px;top:612px;width:155px;height:15px;border:1px solid;border-color:#a0a0a0 #ffffff #ffffff #a0a0a0;background:#f0f0f0"></div><div class="lbl cz" style="left:162px;width:155px;text-align:center;top:614px;color:#1e1e8c">HM67</div><div class="lbl cz" style="left:227px;width:120px;text-align:right;top:614px;color:#000">Rev.</div><div class="a" style="left:351px;top:612px;width:35px;height:15px;border:1px solid;border-color:#a0a0a0 #ffffff #ffffff #a0a0a0;background:#f0f0f0"></div><div class="lbl cz" style="left:351px;width:35px;text-align:center;top:614px;color:#1e1e8c">B3</div><div class="lbl cz" style="left:-36px;width:120px;text-align:right;top:635px;color:#000">LPCIO</div><div class="a" style="left:91px;top:633px;width:68px;height:15px;border:1px solid;border-color:#a0a0a0 #ffffff #ffffff #a0a0a0;background:#f0f0f0"></div><div class="lbl cz" style="left:91px;width:68px;text-align:center;top:635px;color:#1e1e8c">NS</div><div class="a" style="left:162px;top:633px;width:155px;height:15px;border:1px solid;border-color:#a0a0a0 #ffffff #ffffff #a0a0a0;background:#f0f0f0"></div><div class="a" style="left:13px;top:669px;width:384px;height:71px;border:1px solid #a8a8a8;box-shadow:inset 1px 1px 0 #fff, 1px 1px 0 #fff"></div><div class="lbl cz" style="left:19px;top:662px;background:#f0f0f0;padding:0 2px;color:#000">BIOS</div><div class="lbl cz" style="left:-36px;width:120px;text-align:right;top:682px;color:#000">Brand</div><div class="a" style="left:91px;top:680px;width:295px;height:15px;border:1px solid;border-color:#a0a0a0 #ffffff #ffffff #a0a0a0;background:#f0f0f0"></div><div class="lbl cz" style="left:94px;top:682px;color:#1e1e8c">American Megatrends Inc.</div><div class="lbl cz" style="left:-36px;width:120px;text-align:right;top:700px;color:#000">Version</div><div class="a" style="left:91px;top:698px;width:295px;height:15px;border:1px solid;border-color:#a0a0a0 #ffffff #ffffff #a0a0a0;background:#f0f0f0"></div><div class="lbl cz" style="left:94px;top:700px;color:#1e1e8c">E16F2IMS V3.0D</div><div class="lbl cz" style="left:-36px;width:120px;text-align:right;top:718px;color:#000">Date</div><div class="a" style="left:91px;top:716px;width:295px;height:15px;border:1px solid;border-color:#a0a0a0 #ffffff #ffffff #a0a0a0;background:#f0f0f0"></div><div class="lbl cz" style="left:94px;top:718px;color:#1e1e8c">03/03/2011</div><div class="a" style="left:13px;top:750px;width:384px;height:69px;border:1px solid #a8a8a8;box-shadow:inset 1px 1px 0 #fff, 1px 1px 0 #fff"></div><div class="lbl cz" style="left:19px;top:743px;background:#f0f0f0;padding:0 2px;color:#000">Graphic Interface</div><div class="lbl cz" style="left:5px;width:120px;text-align:right;top:761px;color:#000">Version</div><div class="a" style="left:132px;top:759px;width:253px;height:16px;border:1px solid;border-color:#a0a0a0 #ffffff #ffffff #a0a0a0;background:#f0f0f0"></div><div class="lbl cz" style="left:132px;width:253px;text-align:center;top:761px;color:#1e1e8c">PCI-Express</div><div class="lbl cz" style="left:5px;width:120px;text-align:right;top:779px;color:#000">Link Width</div><div class="a" style="left:132px;top:777px;width:83px;height:15px;border:1px solid;border-color:#a0a0a0 #ffffff #ffffff #a0a0a0;background:#f0f0f0"></div><div class="lbl cz" style="left:132px;width:83px;text-align:center;top:779px;color:#1e1e8c">x1</div><div class="lbl cz" style="left:180px;width:120px;text-align:right;top:779px;color:#000">Max. Supported</div><div class="a" style="left:306px;top:777px;width:79px;height:15px;border:1px solid;border-color:#a0a0a0 #ffffff #ffffff #a0a0a0;background:#f0f0f0"></div><div class="lbl cz" style="left:306px;width:79px;text-align:center;top:779px;color:#1e1e8c">x16</div><div class="lbl cz" style="left:5px;width:120px;text-align:right;top:797px;color:#a0a0a0">Side Band</div><div class="a" style="left:132px;top:795px;width:83px;height:15px;border:1px solid;border-color:#a0a0a0 #ffffff #ffffff #a0a0a0;background:#f0f0f0"></div></body></html>
